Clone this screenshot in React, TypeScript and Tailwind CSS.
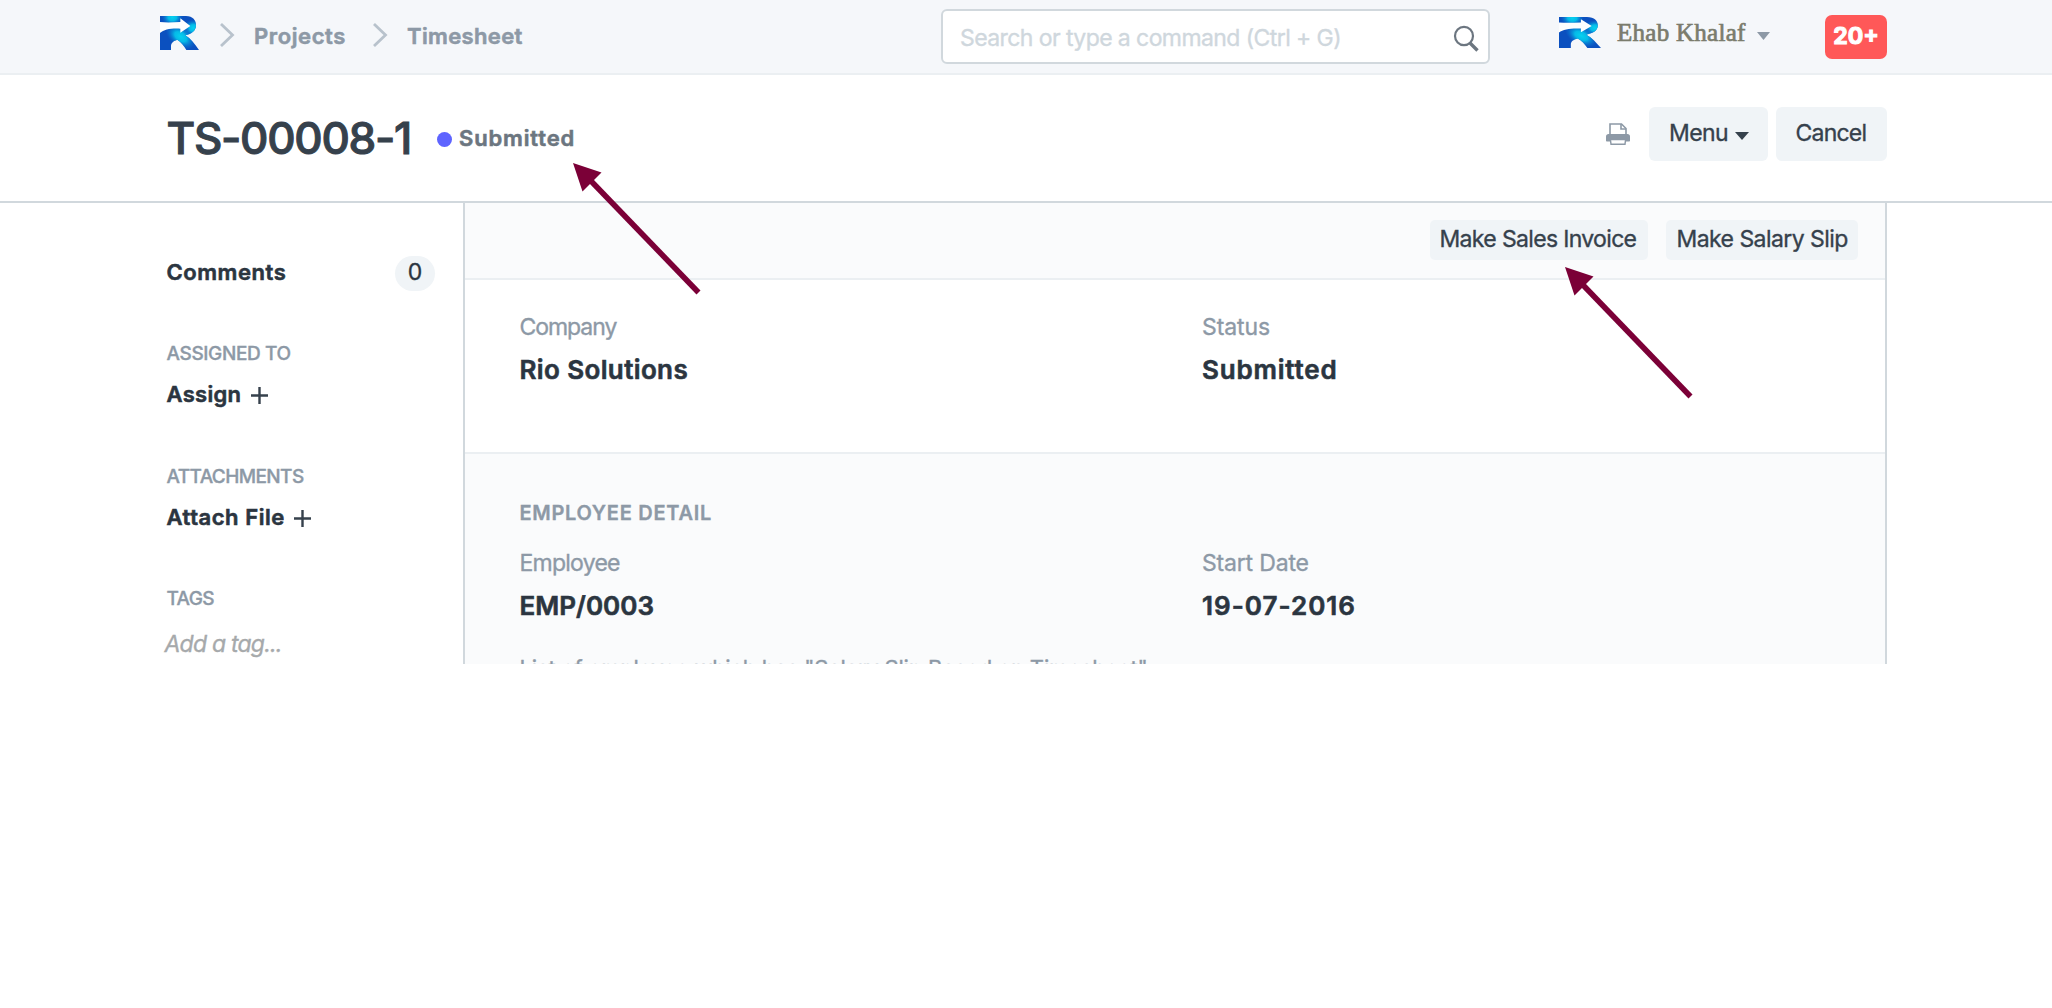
import React from "react";

function Logo({ id, className }: { id: string; className: string }) {
  return (
    <svg viewBox="0 0 117 102" preserveAspectRatio="none" className={className}>
      <defs>
        <radialGradient id={`${id}-glow`}>
          <stop offset="0" stopColor="#05d2f0" />
          <stop offset="0.4" stopColor="#05c6ec" stopOpacity="0.9" />
          <stop offset="1" stopColor="#0a7ad6" stopOpacity="0" />
        </radialGradient>
        <clipPath id={`${id}-shape`}>
          <path d="M0 0H78C99 0 108 13 108 28C108 44 95 54 76 58C92 68 104 84 117 102H79C72 90 63 77 52 71C42 74 33 80 33 90V102H0Z" />
        </clipPath>
      </defs>
      <g clipPath={`url(#${id}-shape)`}>
        <rect width="117" height="102" fill="#0b50bf" />
        <ellipse cx="37" cy="4" rx="32" ry="26" fill={`url(#${id}-glow)`} />
        <ellipse cx="100" cy="36" rx="30" ry="26" fill={`url(#${id}-glow)`} />
        <ellipse cx="62" cy="62" rx="50" ry="30" transform="rotate(35 62 62)" fill={`url(#${id}-glow)`} />
      </g>
      <path d="M0 18C20 20 40 19 61 18V7L91 30L61 50V38C36 36 12 40 0 51Z" fill="#fdfefe" />
    </svg>
  );
}

function Chevron({ className }: { className: string }) {
  return (
    <svg viewBox="0 0 15 24" className={`h-6 w-[15px] ${className}`} fill="none" stroke="#b8c2cc" strokeWidth="2.8">
      <path d="M1 1L12.5 12L1 23" />
    </svg>
  );
}

function Plus() {
  return (
    <svg viewBox="0 0 17 17" className="mt-[8.5px] h-[17px] w-[17px]" stroke="#36414c" strokeWidth="2.4">
      <path d="M0 8.5H17M8.5 0V17" />
    </svg>
  );
}

function Arrow({ className }: { className: string }) {
  return (
    <svg viewBox="0 0 130 134" className={`pointer-events-none absolute h-[134px] w-[130px] ${className}`}>
      <path d="M18 18L125.5 129.5" stroke="#7b0037" strokeWidth="5.6" />
      <path d="M0 0L28.5 9.5L9.5 28.5Z" fill="#7b0037" />
    </svg>
  );
}

function SideHeading({ children, className }: { children: React.ReactNode; className: string }) {
  return <div className={`text-[19px] leading-6 font-medium text-[#8d99a6] ${className}`}>{children}</div>;
}

function Label({ children, className }: { children: React.ReactNode; className: string }) {
  return <div className={`text-[23px] leading-8 text-[#8d99a6] ${className}`}>{children}</div>;
}

function Value({ children, className }: { children: React.ReactNode; className: string }) {
  return <div className={`text-[26px] leading-9 font-semibold text-[#2b3540] [-webkit-text-stroke:0.6px] ${className}`}>{children}</div>;
}

export default function App() {
  return (
    <div className="relative h-[1008px] w-[2052px] overflow-hidden bg-white font-['Inter',sans-serif] whitespace-nowrap text-[#36414c] [-webkit-text-stroke:0.35px]">
      <header className="flex h-[75px] items-start border-b-2 border-[#ebeff2] bg-[#f5f7fa] text-[22px] leading-8 font-semibold text-[#8d99a6]">
        <Logo id="brand" className="mt-4 ml-40 h-[34px] w-[39px]" />
        <Chevron className="mt-[23px] ml-[21px]" />
        <div className="mt-[19.5px] ml-[19px] w-[119px] tracking-[0.61px] [-webkit-text-stroke:0.6px]">Projects</div>
        <Chevron className="mt-[23px]" />
        <div className="mt-[19.5px] ml-[19px] w-[534px] tracking-[0.36px] [-webkit-text-stroke:0.6px]">Timesheet</div>
        <div className="mt-[9px] flex h-[55px] w-[549px] justify-between rounded-[6px] border-2 border-[#d1d8dd] bg-white pr-[9px] pl-[17px]">
          <span className="mt-[11px] text-[23px] font-normal tracking-[-0.58px] text-[#cfd7dd]">
            Search or type a command (Ctrl + G)
          </span>
          <svg viewBox="0 0 26 27" className="mt-[14px] h-[27px] w-[26px]" fill="none" stroke="#6c7680">
            <ellipse cx="11" cy="11" rx="9" ry="9.2" strokeWidth="2.2" />
            <path d="M17 18L24.5 25.5" strokeWidth="3.4" />
          </svg>
        </div>
        <Logo id="avatar" className="mt-[17px] ml-[69px] h-[31px] w-[42px]" />
        <div className="mt-[17px] ml-4 w-[140px] font-['Liberation_Serif',serif] text-[25px] font-normal tracking-[0.27px] text-[#7b7c6d] [-webkit-text-stroke:0.7px]">
          Ehab Khalaf
        </div>
        <svg viewBox="0 0 12 8" className="mt-8 h-2 w-[13px]" preserveAspectRatio="none" fill="#8d99a6">
          <path d="M0 0H12L6 8Z" />
        </svg>
        <div className="mt-[14.5px] ml-[55px] h-11 w-[62px] rounded-[7px] bg-[#ff5858] pt-[5px] text-center text-[23px] font-bold text-white [-webkit-text-stroke:1px]">
          20+
        </div>
      </header>

      <div className="flex h-32 items-start border-b-2 border-[#d1d8dd]">
        <h1 className="mt-[34.5px] ml-[166.5px] w-[270px] text-[44px] leading-[56px] font-medium tracking-[-1.29px] [-webkit-text-stroke:1px]">
          TS-00008-1
        </h1>
        <span className="mt-[56.5px] h-[15px] w-[15px] rounded-full bg-[#5e64ff]" />
        <span className="mt-[47px] ml-[7.5px] w-[1146.5px] text-[22px] leading-8 font-semibold tracking-[0.85px] text-[#6c7680] [-webkit-text-stroke:0.6px]">
          Submitted
        </span>
        <svg viewBox="0 0 24 22" className="mt-[47.5px] h-[22px] w-6" fill="none" stroke="#8d99a6">
          <path d="M4 11V1H15.5L20 5.5V11" strokeWidth="1.6" />
          <path d="M15 1V6H20" strokeWidth="1.6" />
          <path
            d="M2.5 11H21.5C23 11 24 12 24 13.5V17.5C24 18.2 23.5 18.5 23 18.5H1C0.5 18.5 0 18.2 0 17.5V13.5C0 12 1 11 2.5 11Z"
            fill="#8d99a6"
            stroke="none"
          />
          <path d="M4.4 16.6H19.6L19 21.2H5Z" fill="#fff" strokeWidth="1.4" />
        </svg>
        <div className="mt-[31.5px] ml-[19.5px] flex h-[54.5px] w-[118.5px] rounded-[6px] bg-[#f0f4f7] pt-[10.5px] pl-[20px] text-[23px] leading-8 tracking-[-0.59px]">
          Menu
          <svg viewBox="0 0 14 8" className="mt-[14.5px] ml-[7px] h-2 w-[14px]" fill="#36414c">
            <path d="M0 0H14L7 8Z" />
          </svg>
        </div>
        <div className="mt-[31.5px] ml-2 h-[54.5px] w-[111px] rounded-[6px] bg-[#f0f4f7] pt-[10.5px] pl-[20px] text-[23px] leading-8 tracking-[-0.77px]">
          Cancel
        </div>
      </div>

      <div className="flex h-[461px] overflow-hidden">
        <aside className="w-[463px] pt-[53px] pl-[166.5px] text-[22px] leading-8 font-semibold text-[#2b3540]">
          <div className="flex h-[35px] w-[268.5px] justify-between">
            <span className="tracking-[0.55px] [-webkit-text-stroke:0.6px]">Comments</span>
            <span className="h-[35px] w-10 rounded-full bg-[#f0f4f7] text-center text-[23px] font-normal">0</span>
          </div>
          <SideHeading className="mt-[51px] tracking-[-0.37px]">ASSIGNED TO</SideHeading>
          <div className="mt-3 flex">
            <span className="w-[84px] tracking-[0.29px] [-webkit-text-stroke:0.6px]">Assign</span>
            <Plus />
          </div>
          <SideHeading className="mt-[55px] tracking-[-0.6px]">ATTACHMENTS</SideHeading>
          <div className="mt-3 flex">
            <span className="w-[127.5px] tracking-[0.55px] [-webkit-text-stroke:0.6px]">Attach File</span>
            <Plus />
          </div>
          <SideHeading className="mt-[54px] tracking-[-0.7px]">TAGS</SideHeading>
          <div className="mt-[16.5px] -ml-[2px] text-[23px] font-normal tracking-[-0.78px] text-[#a6a9ab] italic">Add a tag...</div>
        </aside>

        <main className="w-[1424px] border-x-2 border-[#d1d8dd]">
          <div className="flex h-[77px] justify-end gap-[18px] border-b-2 border-[#ebeff2] bg-[#fafbfc] pt-[16.5px] pr-[27.5px] text-[23px] leading-8">
            <div className="h-10 w-[218px] rounded-[5px] bg-[#f0f4f7] pt-[3.5px] pl-[10px] tracking-[-0.66px]">Make Sales Invoice</div>
            <div className="h-10 w-[192px] rounded-[5px] bg-[#f0f4f7] pt-[3.5px] pl-[11px] tracking-[-0.56px]">Make Salary Slip</div>
          </div>
          <section className="grid h-[174px] grid-cols-[682.5px_1fr] border-b-2 border-[#ebeff2] pt-[31px] pl-[54.5px]">
            <div>
              <Label className="tracking-[-1.05px]">Company</Label>
              <Value className="mt-[8.5px] tracking-[0.38px]">Rio Solutions</Value>
            </div>
            <div>
              <Label className="tracking-[-0.09px]">Status</Label>
              <Value className="mt-[8.5px] tracking-[0.82px]">Submitted</Value>
            </div>
          </section>
          <section className="h-[240px] bg-[#fafbfc] pt-[44.5px] pl-[54.5px]">
            <h2 className="text-[20px] leading-7 font-semibold tracking-[0.72px] text-[#8d99a6]">EMPLOYEE DETAIL</h2>
            <div className="mt-5 grid grid-cols-[682.5px_1fr]">
              <div>
                <Label className="tracking-[-0.76px]">Employee</Label>
                <Value className="mt-[9px] tracking-[0.02px]">EMP/0003</Value>
              </div>
              <div>
                <Label className="tracking-[-0.18px]">Start Date</Label>
                <Value className="mt-[9px] tracking-[1.02px]">19-07-2016</Value>
              </div>
            </div>
            <p className="mt-[29.5px] text-[22px] leading-[30px] tracking-[-0.16px] text-[#8d99a6]">
              List of employee which has "Salary Slip Based on Timesheet"
            </p>
          </section>
        </main>
      </div>

      <Arrow className="top-[162.5px] left-[573px]" />
      <Arrow className="top-[267px] left-[1565px]" />
    </div>
  );
}
